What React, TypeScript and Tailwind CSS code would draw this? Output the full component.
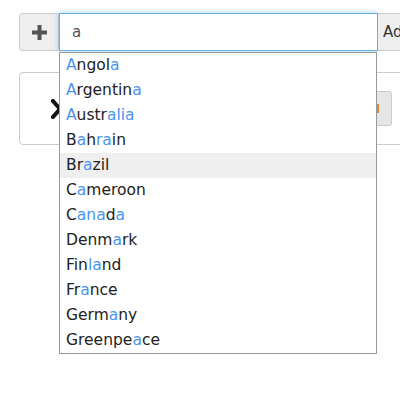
const countries: { name: string; marks: number[] }[] = [
  { name: "Angola", marks: [0, 5] },
  { name: "Argentina", marks: [0, 8] },
  { name: "Australia", marks: [0, 5, 6, 7, 8] },
  { name: "Bahrain", marks: [1, 3, 4] },
  { name: "Brazil", marks: [2] },
  { name: "Cameroon", marks: [1] },
  { name: "Canada", marks: [1, 2, 3, 5] },
  { name: "Denmark", marks: [4] },
  { name: "Finland", marks: [3, 4] },
  { name: "France", marks: [2] },
  { name: "Germany", marks: [4] },
  { name: "Greenpeace", marks: [7] },
];

const ACTIVE = "Brazil";

function Highlighted({ name, marks }: { name: string; marks: number[] }) {
  return (
    <span>
      {name.split("").map((ch, i) => (
        <span key={i} className={marks.includes(i) ? "text-[#4a95ea]" : ""}>
          {ch}
        </span>
      ))}
    </span>
  );
}

export default function App() {
  return (
    <div
      className="relative h-[400px] w-[400px] overflow-hidden bg-white pl-[19px] pt-[13px] text-[#222]"
      style={{ fontFamily: '"DejaVu Sans", sans-serif' }}
    >
      <div className="flex h-[38px] w-[440px]">
        <button className="flex h-[38px] w-[40px] shrink-0 items-center justify-center rounded-l-[3px] border border-[#ccc] bg-[#eee]">
          <svg width="15" height="15" viewBox="0 0 15 15">
            <rect x="5.5" y="0" width="4" height="15" fill="#555" />
            <rect x="0" y="5.5" width="15" height="4" fill="#555" />
          </svg>
        </button>
        <div className="flex h-[38px] w-[319px] shrink-0 items-center border border-[#66afe9] bg-white px-[12px] text-[15px] text-[#555] shadow-[0_0_6px_rgba(102,175,233,0.6)]">
          a
        </div>
        <div className="flex h-[38px] w-[60px] shrink-0 items-center border border-l-0 border-[#ccc] bg-[#eee] pl-[5px] text-[15px] text-[#333]">
          Add
        </div>
      </div>

      <div className="mt-[21px] flex h-[73px] w-[420px] items-center rounded-[4px] border border-[#ccc]">
        <svg className="ml-[31px]" width="18" height="20" viewBox="0 0 18 20">
          <path d="M2 2 L16 18 M16 2 L2 18" stroke="#111" strokeWidth="4" strokeLinecap="square" />
        </svg>
        <div className="ml-auto mr-[46px] flex h-[35px] w-[17px] items-center justify-start rounded-[3px] border border-[#ccc] bg-[#e6e6e6] pl-[1px]">
          <span className="block h-[9px] w-[2px] bg-[#d9893a]" />
        </div>
      </div>

      <ul className="absolute left-[59px] top-[52px] w-[318px] border border-[#999] bg-white text-[15.5px]">
        {countries.map((c) => (
          <li
            key={c.name}
            className={`flex h-[25px] items-center px-[6px] ${c.name === ACTIVE ? "bg-[#efefef]" : ""}`}
          >
            <Highlighted name={c.name} marks={c.marks} />
          </li>
        ))}
      </ul>
    </div>
  );
}
